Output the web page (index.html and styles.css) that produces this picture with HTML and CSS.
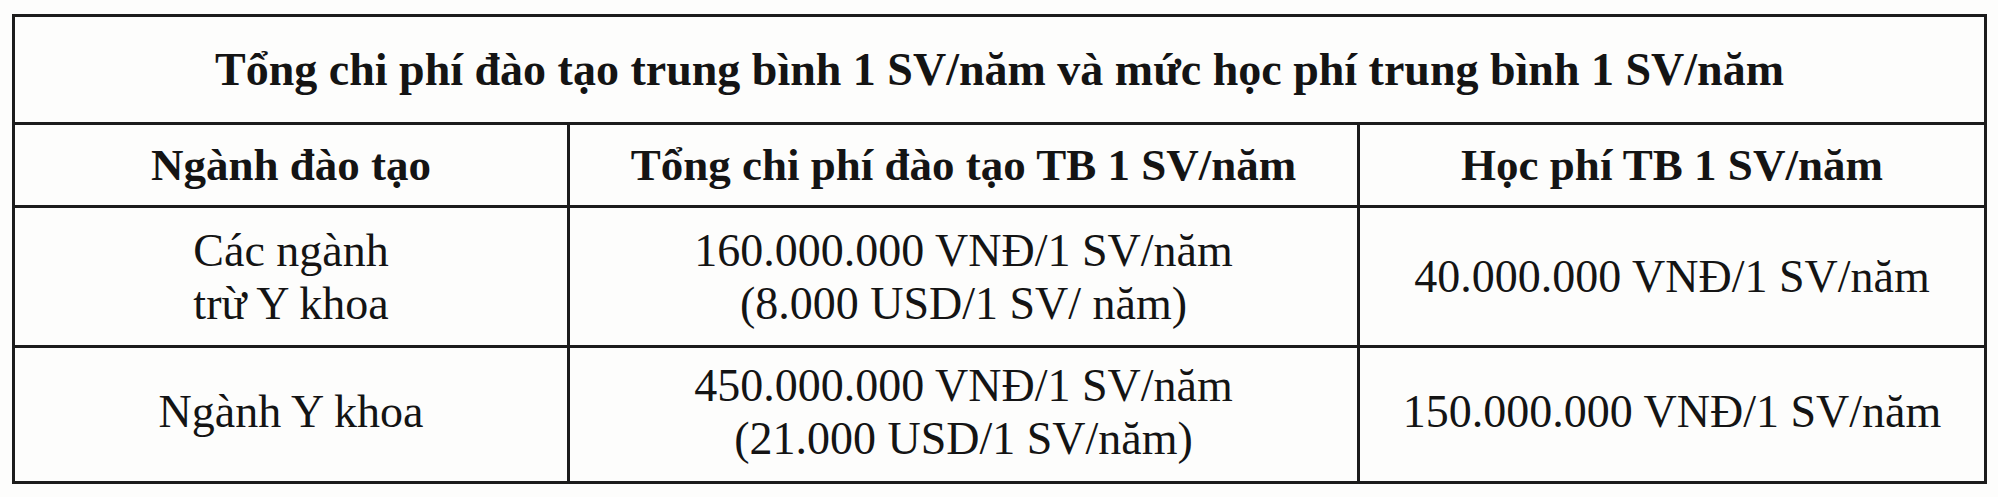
FILE: index.html
```html
<!DOCTYPE html>
<html lang="vi">
<head>
<meta charset="utf-8">
<title>Chi phí đào tạo</title>
<link rel="stylesheet" href="styles.css">
</head>
<body>
<table class="fees">
  <colgroup>
    <col class="c1">
    <col class="c2">
    <col class="c3">
  </colgroup>
  <tr class="r-title">
    <th colspan="3">Tổng chi phí đào tạo trung bình 1 SV/năm và mức học phí trung bình 1 SV/năm</th>
  </tr>
  <tr class="r-head">
    <th>Ngành đào tạo</th>
    <th>Tổng chi phí đào tạo TB 1 SV/năm</th>
    <th>Học phí TB 1 SV/năm</th>
  </tr>
  <tr class="r-one">
    <td>Các ngành<br>trừ Y khoa</td>
    <td>160.000.000 VNĐ/1 SV/năm<br>(8.000 USD/1 SV/ năm)</td>
    <td>40.000.000 VNĐ/1 SV/năm</td>
  </tr>
  <tr class="r-two">
    <td>Ngành Y khoa</td>
    <td>450.000.000 VNĐ/1 SV/năm<br>(21.000 USD/1 SV/năm)</td>
    <td>150.000.000 VNĐ/1 SV/năm</td>
  </tr>
</table>
</body>
</html>
```
FILE: styles.css
```css
html, body {
  margin: 0;
  padding: 0;
  background: #fdfdfc;
}
body {
  padding: 14px 0 0 12px;
  font-family: "Liberation Serif", "Times New Roman", serif;
  color: #141414;
}
.fees {
  border-collapse: collapse;
  width: 1972px;
  table-layout: fixed;
}
.c1 { width: 555px; }
.c2 { width: 790px; }
.c3 { width: 627px; }
.fees th,
.fees td {
  border: 3px solid #1c1c1c;
  text-align: center;
  vertical-align: middle;
  padding: 0;
  font-size: 46px;
  line-height: 53px;
}
.fees th {
  font-weight: bold;
}
.r-title th {
  height: 105px;
  font-size: 46px;
}
.r-head th {
  height: 80px;
  font-size: 45px;
}
.r-one td {
  height: 137px;
}
.r-two td {
  height: 127px;
  padding-bottom: 6px;
}
```
